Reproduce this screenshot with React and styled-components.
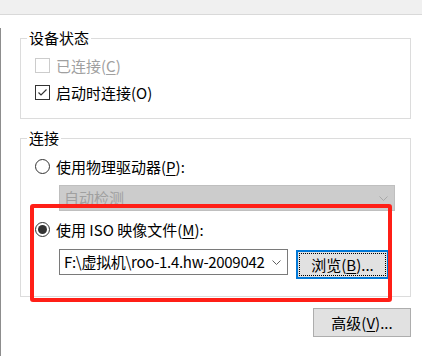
import React from "react";
import styled, { createGlobalStyle } from "styled-components";

const GlobalStyle = createGlobalStyle`
  html, body { margin: 0; padding: 0; background: #fff; }
  body {
    width: 422px; height: 356px; overflow: hidden;
    font-family: "Noto Sans CJK SC", "Noto Sans", sans-serif;
    font-size: 15px; color: #000;
  }
`;

const Page = styled.div`
  position: relative;
  width: 422px;
  height: 356px;
  display: flex;
  flex-direction: column;
`;

const TopBar = styled.div`
  flex: none;
  height: 14px;
  background: #f0f0f0;
  border-bottom: 1px solid #d9d9d9;
`;

const Body = styled.div`
  flex: 1;
  display: flex;
`;

const SideRule = styled.div`
  flex: none;
  width: 1px;
  margin-top: 13px;
  background: #8d8d8d;
`;

const Content = styled.div`
  flex: 1;
  padding: 14px 11px 0 19px;
  display: flex;
  flex-direction: column;
`;

const Group = styled.fieldset`
  margin: ${(p) => p.$gap}px 0 0 0;
  padding: 0;
  border: 1px solid #dcdcdc;
  min-width: 0;
`;

const Legend = styled.legend`
  margin-left: 6px;
  padding: 0 2px;
  line-height: 18px;
  font-size: 15px;
`;

const GroupBody = styled.div`
  display: flex;
  flex-direction: column;
  padding: ${(p) => p.$pad};
`;

const OptionRow = styled.label`
  display: flex;
  align-items: center;
  gap: 6px;
  height: 27px;
  margin-top: ${(p) => p.$mt || 0}px;
  color: ${(p) => (p.$disabled ? "#a0a0a0" : "#000")};
  line-height: 20px;
`;

const Box = styled.span`
  flex: none;
  width: 13px;
  height: 13px;
  border: 1px solid ${(p) => (p.$disabled ? "#cccccc" : "#333333")};
  background: #fff;
  display: flex;
  align-items: center;
  justify-content: center;
`;

const Radio = styled.span`
  flex: none;
  width: 15px;
  height: 15px;
  box-sizing: border-box;
  border: 1px solid #333;
  border-radius: 50%;
  background: #fff;
  display: flex;
  align-items: center;
  justify-content: center;
  &::after {
    content: "";
    display: ${(p) => (p.$checked ? "block" : "none")};
    width: 9px;
    height: 9px;
    border-radius: 50%;
    background: #333;
  }
`;

const Key = styled.span`
  text-decoration: underline;
  text-underline-offset: 2px;
`;

const Combo = styled.div`
  box-sizing: border-box;
  display: flex;
  align-items: center;
  height: 26px;
  width: ${(p) => p.$w}px;
  margin-left: ${(p) => p.$ml || 0}px;
  margin-top: ${(p) => p.$mt || 0}px;
  padding: 0 6px 0 4px;
  border: 1px solid ${(p) => (p.$disabled ? "#bfbfbf" : "#7a7a7a")};
  background: ${(p) => (p.$disabled ? "#cccccc" : "#fff")};
  color: ${(p) => (p.$disabled ? "#a0a0a0" : "#000")};
  flex: none;
`;

const ComboText = styled.span`
  flex: 1;
  white-space: nowrap;
  line-height: 22px;
  letter-spacing: ${(p) => p.$ls || 0}px;
`;

const FileRow = styled.div`
  display: flex;
  align-items: flex-start;
  gap: 8px;
  margin-left: 24px;
  margin-top: 6px;
`;

const Button = styled.div`
  box-sizing: border-box;
  flex: none;
  display: flex;
  align-items: center;
  justify-content: center;
  height: 29px;
  width: ${(p) => p.$w}px;
  margin-top: ${(p) => p.$mt || 0}px;
  align-self: ${(p) => p.$align || "auto"};
  background: #e1e1e1;
  border: ${(p) => (p.$focused ? "2px solid #0078d7" : "1px solid #adadad")};
  position: relative;
  line-height: 20px;
`;

const FocusRing = styled.span`
  position: absolute;
  inset: 1px;
  border: 1px dotted #000;
  pointer-events: none;
`;

const Highlight = styled.div`
  position: absolute;
  left: 30px;
  top: 204px;
  width: 362px;
  height: 98px;
  box-sizing: border-box;
  border: 4px solid #ff1f17;
  border-radius: 3px;
  pointer-events: none;
`;

const Chevron = ({ color }) => (
  <svg width="9" height="5" viewBox="0 0 9 5" style={{ flex: "none" }}>
    <polyline points="0.5,0.5 4.5,4.5 8.5,0.5" fill="none" stroke={color} strokeWidth="1" />
  </svg>
);

const Check = () => (
  <svg width="11" height="11" viewBox="0 0 11 11">
    <polyline points="1.5,5.5 4,8 9.5,2.5" fill="none" stroke="#333" strokeWidth="1.2" />
  </svg>
);

export default function App() {
  return (
    <>
      <GlobalStyle />
      <Page>
        <TopBar />
        <Body>
          <SideRule />
          <Content>
            <Group $gap={0}>
              <Legend>设备状态</Legend>
              <GroupBody $pad="5px 0 12px 14px">
                <OptionRow $disabled>
                  <Box $disabled />
                  <span>已连接(<Key>C</Key>)</span>
                </OptionRow>
                <OptionRow>
                  <Box>
                    <Check />
                  </Box>
                  <span>启动时连接(O)</span>
                </OptionRow>
              </GroupBody>
            </Group>

            <Group $gap={10}>
              <Legend>连接</Legend>
              <GroupBody $pad="6px 0 17px 14px">
                <OptionRow>
                  <Radio />
                  <span>使用物理驱动器(<Key>P</Key>):</span>
                </OptionRow>
                <Combo $disabled $w={336} $ml={24} $mt={5}>
                  <ComboText>自动检测</ComboText>
                  <Chevron color="#a8a8a8" />
                </Combo>
                <OptionRow $mt={5}>
                  <Radio $checked />
                  <span>使用 ISO 映像文件(<Key>M</Key>):</span>
                </OptionRow>
                <FileRow>
                  <Combo $w={229}>
                    <ComboText $ls={-0.3}>F:\虚拟机\roo-1.4.hw-2009042</ComboText>
                    <Chevron color="#606060" />
                  </Combo>
                  <Button $w={93} $mt={1} $focused>
                    <FocusRing />
                    浏览(<Key>B</Key>)...
                  </Button>
                </FileRow>
              </GroupBody>
            </Group>

            <Button $w={98} $mt={11} $align="flex-end">
              高级(<Key>V</Key>)...
            </Button>
          </Content>
        </Body>
        <Highlight />
      </Page>
    </>
  );
}
